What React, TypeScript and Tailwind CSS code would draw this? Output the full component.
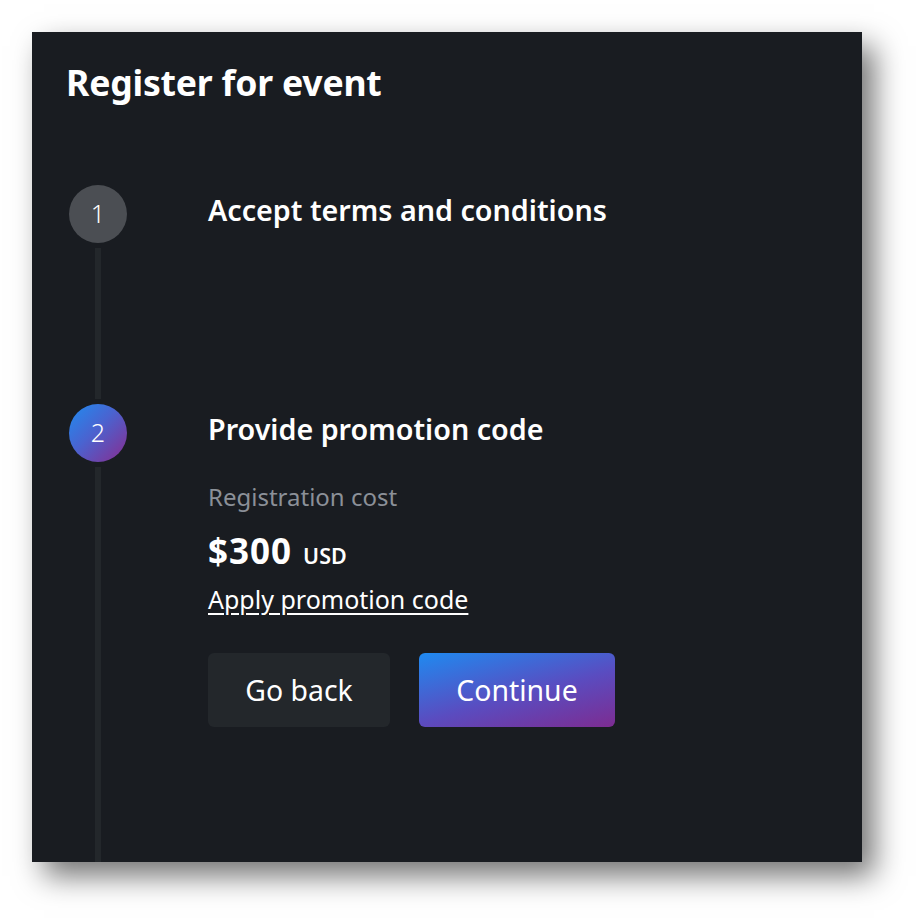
import React from "react";

export default function App() {
  return (
    <div className="w-[924px] h-[924px] bg-white relative overflow-hidden" style={{ fontFamily: '"Noto Sans", "Open Sans", sans-serif' }}>
      <div className="absolute left-[32px] top-[32px] w-[830px] h-[830px] bg-[#191c21] shadow-[12px_14px_28px_rgba(0,0,0,0.55)] flex flex-col">
        <h1 className="pl-[34px] pt-[28px] text-[35.6px] leading-[44px] font-bold text-white tracking-[-0.2px]">Register for event</h1>
        <div className="flex flex-col flex-1 pt-[81px]">
          {/* Step 1 */}
          <div className="flex h-[219px]">
            <div className="w-[58px] ml-[37px] flex flex-col items-center">
              <div className="w-[58px] h-[58px] shrink-0 rounded-full bg-[#4b4e53] flex items-center justify-center text-white text-[25px] font-light">1</div>
              <div className="w-[6px] flex-1 mt-[5px] mb-[5px] bg-[#23272b]"></div>
            </div>
            <div className="pl-[81px]">
              <div className="text-[28.7px] leading-[50px] font-semibold text-white">Accept terms and conditions</div>
            </div>
          </div>
          {/* Step 2 */}
          <div className="flex flex-1">
            <div className="w-[58px] ml-[37px] flex flex-col items-center">
              <div className="w-[58px] h-[58px] shrink-0 rounded-full flex items-center justify-center text-white text-[25px] font-light" style={{ backgroundImage: "linear-gradient(135deg, #1f8cf0 0%, #4a63d0 45%, #8a2b8e 100%)" }}>2</div>
              <div className="w-[6px] flex-1 mt-[5px] bg-[#23272b]"></div>
            </div>
            <div className="pl-[81px] flex flex-col">
              <div className="text-[28.7px] leading-[50px] font-semibold text-white">Provide promotion code</div>
              <div className="mt-[27px] text-[24px] leading-[32px] text-[#8b9098]">Registration cost</div>
              <div className="mt-[16px] flex items-baseline gap-[11px] text-white">
                <span className="text-[35px] leading-[44px] font-bold tracking-[1px]">$300</span>
                <span className="text-[21.5px] font-semibold">USD</span>
              </div>
              <a className="mt-[9px] text-[25px] leading-[34px] text-white underline underline-offset-[4px]">Apply promotion code</a>
              <div className="mt-[37px] flex gap-[29px]">
                <button className="w-[182px] h-[74px] rounded-[6px] bg-[#23272b] text-white text-[28.4px]">Go back</button>
                <button className="w-[196px] h-[74px] rounded-[6px] text-white text-[28.4px]" style={{ backgroundImage: "linear-gradient(165deg, #1f8af0 0%, #5a4cc0 55%, #7d2c91 100%)" }}>Continue</button>
              </div>
            </div>
          </div>
        </div>
      </div>
    </div>
  );
}
